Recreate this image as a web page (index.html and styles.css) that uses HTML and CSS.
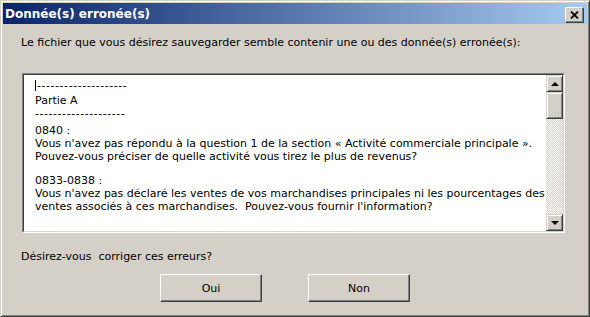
FILE: index.html
```html
<!DOCTYPE html>
<html lang="fr">
<head>
<meta charset="utf-8">
<title>Donnée(s) erronée(s)</title>
<link rel="stylesheet" href="styles.css">
</head>
<body>
<div class="window">
  <div class="titlebar">
    <span class="title">Donnée(s) erronée(s)</span>
    <span class="close"><svg width="9" height="8" viewBox="0 0 9 8"><path d="M1 0.5 L8 7.5 M8 0.5 L1 7.5" stroke="#000" stroke-width="1.8" fill="none"/></svg></span>
  </div>
  <div class="msg">Le fichier que vous désirez sauvegarder semble contenir une ou des donnée(s) erronée(s):</div>
  <div class="textbox">
    <div class="textbox-inner">
      <div class="text">
        <div class="line"><span class="caret"></span><span class="dashes">--------------------</span></div>
        <div class="line gap-s">Partie A</div>
        <div class="line"><span class="dashes">--------------------</span></div>
        <div class="line gap-m">0840 :</div>
        <div class="line">Vous n'avez pas répondu à la question 1 de la section « Activité commerciale principale ».</div>
        <div class="line">Pouvez-vous préciser de quelle activité vous tirez le plus de revenus?</div>
        <div class="line blank"> </div>
        <div class="line">0833-0838 :</div>
        <div class="line">Vous n'avez pas déclaré les ventes de vos marchandises principales ni les pourcentages des</div>
        <div class="line">ventes associés à ces marchandises.  Pouvez-vous fournir l'information?</div>
      </div>
      <div class="scrollbar">
        <div class="sbtn"><span class="arrow-up"></span></div>
        <div class="thumb"></div>
        <div class="track"></div>
        <div class="sbtn"><span class="arrow-down"></span></div>
      </div>
    </div>
  </div>
  <div class="question">Désirez-vous  corriger ces erreurs?</div>
  <div class="buttons">
    <button class="btn">Oui</button>
    <button class="btn">Non</button>
  </div>
</div>
</body>
</html>
```
FILE: styles.css
```css
html, body {
  margin: 0;
  padding: 0;
  background: #D4D0C8;
}
body {
  font-family: "DejaVu Sans", Verdana, sans-serif;
  font-size: 11px;
  color: #000;
}
.window {
  width: 590px;
  height: 317px;
  box-sizing: border-box;
  border: 1px solid;
  border-color: #D4D0C8 #404040 #404040 #D4D0C8;
  box-shadow: inset 1px 1px #fff, inset -1px -1px #808080;
  padding: 2px;
  display: flex;
  flex-direction: column;
  background: #D4D0C8;
}
.titlebar {
  height: 21px;
  flex: none;
  background: linear-gradient(to right, #0A246A, #A6CAF0);
  display: flex;
  align-items: center;
  justify-content: space-between;
  padding: 0 3px 0 2px;
}
.title {
  color: #fff;
  font-weight: bold;
  font-size: 12px;
}
.close {
  width: 19px;
  height: 16px;
  box-sizing: border-box;
  background: #D4D0C8;
  border: 1px solid;
  border-color: #fff #404040 #404040 #fff;
  box-shadow: inset -1px -1px #808080;
  display: flex;
  align-items: center;
  justify-content: center;
  margin-top: 3px;
}
.msg {
  margin-top: 12px;
  padding-left: 18px;
  line-height: 13px;
  white-space: nowrap;
}
.textbox {
  margin: 24px 0 0 19px;
  width: 543px;
  height: 160px;
  box-sizing: border-box;
  border: 1px solid;
  border-color: #808080 #fff #fff #808080;
  flex: none;
}
.textbox-inner {
  height: 100%;
  box-sizing: border-box;
  border: 1px solid;
  border-color: #404040 #D4D0C8 #D4D0C8 #404040;
  background: #fff;
  display: flex;
}
.text {
  flex: 1;
  padding: 4px 0 0 11px;
  line-height: 13px;
  overflow: hidden;
}
.line {
  white-space: pre;
  height: 13px;
}
.gap-s {
  margin-top: 2px;
}
.gap-m {
  margin-top: 4px;
}
.blank {
  height: 11px;
}
.caret {
  display: inline-block;
  width: 1px;
  height: 11px;
  background: #000;
  vertical-align: -2px;
  margin-right: 1px;
}
.dashes {
  letter-spacing: 0.55px;
}
.scrollbar {
  width: 17px;
  flex: none;
  display: flex;
  flex-direction: column;
}
.sbtn, .thumb {
  box-sizing: border-box;
  background: #D4D0C8;
  border: 1px solid;
  border-color: #D4D0C8 #404040 #404040 #D4D0C8;
  box-shadow: inset 1px 1px #fff, inset -1px -1px #808080;
}
.sbtn {
  height: 17px;
  display: flex;
  align-items: center;
  justify-content: center;
  flex: none;
}
.thumb {
  height: 27px;
  flex: none;
}
.track {
  flex: 1;
  background-color: #D4D0C8;
  background-image: conic-gradient(#fff 25%, #D4D0C8 0 50%, #fff 0 75%, #D4D0C8 0);
  background-size: 2px 2px;
}
.arrow-up {
  width: 0;
  height: 0;
  border-left: 4px solid transparent;
  border-right: 4px solid transparent;
  border-bottom: 4px solid #000;
}
.arrow-down {
  width: 0;
  height: 0;
  border-left: 4px solid transparent;
  border-right: 4px solid transparent;
  border-top: 4px solid #000;
}
.question {
  margin-top: 17px;
  padding-left: 18px;
  line-height: 13px;
  white-space: pre;
}
.buttons {
  margin-top: 11px;
  padding-left: 157px;
  display: flex;
  gap: 46px;
}
.btn {
  width: 102px;
  height: 28px;
  box-sizing: border-box;
  background: #D4D0C8;
  border: 1px solid;
  border-color: #fff #404040 #404040 #fff;
  box-shadow: inset -1px -1px #808080;
  font-family: "DejaVu Sans", Verdana, sans-serif;
  font-size: 11px;
  color: #000;
  padding: 0;
}
```
